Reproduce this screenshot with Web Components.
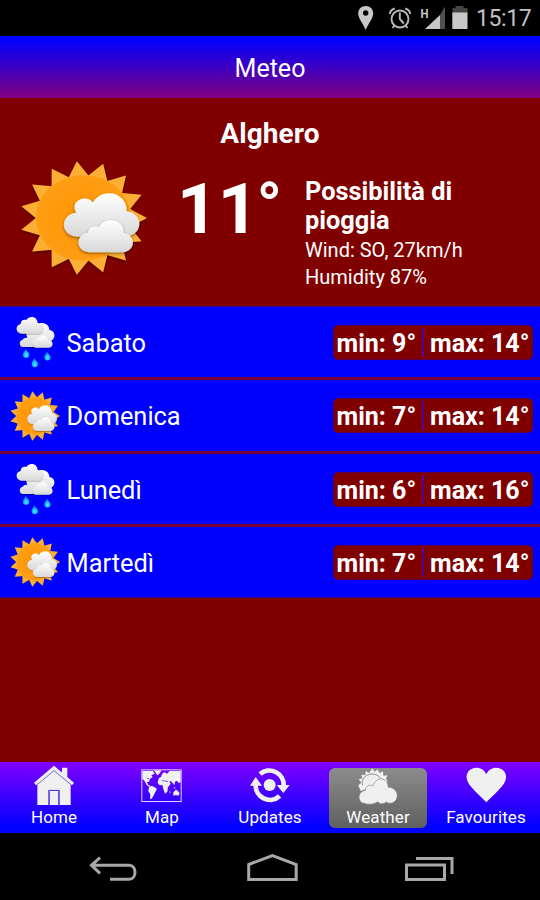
<!DOCTYPE html>
<html lang="it">
<head>
<meta charset="utf-8">
<title>Meteo</title>
<style>
    body {
    margin: 0;
    width: 540px;
    height: 900px;
    overflow: hidden;
    background: #800000;
    color: #fff;
    font-family: Roboto, "Liberation Sans", sans-serif;
    }
</style>
</head>
<body>
<weather-app>
    <status-bar slot="top" time="15:17"></status-bar>
    <page-header slot="top">Meteo</page-header>
    <current-weather city="Alghero" temp="11" icon="sun">
        <span slot="summary">Possibilità di pioggia</span>
        <span slot="wind">Wind: SO, 27km/h</span>
        <span slot="humidity">Humidity 87%</span>
    </current-weather>
    <forecast-list>
        <forecast-day icon="rain" min="9°" max="14°">Sabato</forecast-day>
        <forecast-day icon="sun" min="7°" max="14°">Domenica</forecast-day>
        <forecast-day icon="rain" min="6°" max="16°">Lunedì</forecast-day>
        <forecast-day icon="sun" min="7°" max="14°">Martedì</forecast-day>
    </forecast-list>
    <tab-bar slot="bottom">
        <tab-item icon="home">Home</tab-item>
        <tab-item icon="map">Map</tab-item>
        <tab-item icon="updates">Updates</tab-item>
        <tab-item icon="weather" active>Weather</tab-item>
        <tab-item icon="favourites">Favourites</tab-item>
    </tab-bar>
    <nav-bar slot="bottom"></nav-bar>
</weather-app>

<script>
class BaseElement extends HTMLElement {
    constructor() {
    super();
    this.attachShadow({ mode: 'open' });
}

connectedCallback() {
    this.shadowRoot.innerHTML = this.render();
}
}

class WeatherApp extends BaseElement {
render() {
    return `
    <style>
        :host {
        display: flex;
        flex-direction: column;
        height: 900px;
        }

        main {
        flex: 1;
        min-height: 0;
        }
    </style>
    <slot name="top"></slot>
    <main><slot></slot></main>
    <slot name="bottom"></slot>
    `;
}
}

class StatusBar extends BaseElement {
render() {
    return `
    <style>
        :host {
        display: flex;
        justify-content: flex-end;
        box-sizing: border-box;
        height: 36px;
        padding-right: 8px;
        background: #000;
        color: #c0c0c0;
        }

        svg {
        width: 120px;
        height: 36px;
        }

        .time {
        width: 56px;
        font-size: 23px;
        line-height: 38px;
        letter-spacing: -0.4px;
        white-space: nowrap;
        }
    </style>
    <svg viewBox="356 0 120 36" fill="#c8c8c8">
        <path fill-rule="evenodd" d="M365.7 6c-4.400 0-7.500 3.200-7.500 7.300 0 5.200 5 10.500 7.500 16.700 2.500-6.200 7.500-11.500 7.500-16.700 0-4.100-3.100-7.300-7.500-7.300zM365.700 10.300a2.700 2.700 0 1 1 0 5.400 2.700 2.700 0 0 1 0-5.400z"/>
        <g fill="none" stroke="#b8b8b8" stroke-width="1.900">
            <circle cx="400" cy="19" r="8.500"/>
            <path d="M399.800 12.500v6.500l4 4.500M389.800 14c.3-2.700 2-4.700 5-5.500M410.200 14c-.3-2.700-2-4.700-5-5.500M394.500 25.500l-2 2.500M405.500 25.500l2 2.500"/>
        </g>
        <path d="M425 29l15-14v14z"/>
        <path fill="#505050" d="M440 15l5-8.500V29h-5z"/>
        <text x="420.500" y="17.500" font-size="13" font-weight="bold" textLength="8" lengthAdjust="spacingAndGlyphs">H</text>
        <path fill="#454545" d="M455.500 6h8v2h4v5h-15V8h3z"/>
        <path d="M452.300 12.500h15.200V29h-15.200z"/>
    </svg>
    <span class="time">${this.getAttribute('time')}</span>
    `;
}
}

class PageHeader extends BaseElement {
render() {
    return `
    <style>
        :host {
        display: block;
        height: 62px;
        background: linear-gradient(#0000ff 5%, #800080);
        font-size: 25px;
        line-height: 66px;
        text-align: center;
        }
    </style>
    <slot></slot>
    `;
}
}

// Sun rays: 15 outer tips, first one pointing right
function sunRays() {
    const points = [];
    for (let i = 0; i < 30; i++) {
        const r = i % 2 ? 48 : 64;
        const a = i * Math.PI / 15;
        points.push((r * Math.cos(a)).toFixed(1) + ',' + (r * Math.sin(a)).toFixed(1));
    }
    return points.join(' ');
}

const CLOUD_FILL = `
    <linearGradient id="cloud" x1="0" y1="0" x2="0" y2="1">
        <stop offset="0" stop-color="#fff"/>
        <stop offset="1" stop-color="#d8d8d8"/>
    </linearGradient>
    <filter id="shadow" x="-20%" y="-20%" width="140%" height="150%">
        <feDropShadow dx="0" dy="1.500" stdDeviation="1.500" flood-color="#000" flood-opacity="0.450"/>
    </filter>`;

const WEATHER_ICONS = {
    sun: `
    <svg viewBox="-64 -64 128 128" preserveAspectRatio="none">
        <defs>${CLOUD_FILL}
            <radialGradient id="disc"><stop offset="0" stop-color="#ff9400"/><stop offset="1" stop-color="#ff9e14"/></radialGradient>
        </defs>
        <polygon points="${sunRays()}" fill="#fbb034" filter="url(#shadow)"/>
        <circle r="48" fill="url(#disc)"/>
        <path fill="url(#cloud)" filter="url(#shadow)" d="M-5 21A13.500 13.500 0 0 1-7.500-6 9.800 9.800 0 0 1 9.500-17.500C13-24 19-27.700 26-27.700 36-27.700 44-19 43.500-7.500A13.800 13.800 0 0 1 41 20.600z"/>
        <path fill="url(#cloud)" filter="url(#shadow)" d="M5 38.400A11 11 0 0 1 4.500 16.500 7.500 7.500 0 0 1 15.500 10C19 4.500 23 2.600 28 2.600 36 2.600 40.500 9 40.500 16.500A11 11 0 0 1 37 38.400z"/>
    </svg>`,
    rain: `
    <svg viewBox="30 48 150 168">
        <defs>${CLOUD_FILL}
            <radialGradient id="drop" cy="70%"><stop offset="0" stop-color="#50ecff"/><stop offset="1" stop-color="#0098f0"/></radialGradient>
        </defs>
        <path fill="url(#cloud)" filter="url(#shadow)" d="M70 150c-14-1-14-20-2-22 3-4 8-7 14-5l-5-20 45-25c16-1 26 8 26 21 18 2 20 24 6 32l-50 19z"/>
        <path fill="url(#cloud)" filter="url(#shadow)" d="M64 110c-18-2-19-26-2-29 0-11 9-15 17-12 9-15 33-12 34 9 22-1 24 29 4 32z"/>
        <path fill="url(#cloud)" filter="url(#shadow)" d="M108 152c-15-1-15-22 0-24 0-8 8-10 12-8 9-10 25-4 24 10 18-1 18 21 2 22z"/>
        <g fill="url(#drop)">
            <path id="d" d="M77 156c3 7 11 10 11 17a9.500 9.500 0 0 1-19 0c0-7 6-10 8-17z"/>
            <use href="#d" x="26" y="28"/>
            <use href="#d" x="64" y="8"/>
        </g>
    </svg>`
};

class WeatherIcon extends BaseElement {
render() {
    return `
    <style>
        :host {
        display: block;
        }

        svg {
        display: block;
        width: 100%;
        height: 100%;
        overflow: visible;
        }
    </style>
    ${WEATHER_ICONS[this.getAttribute('name')]}
    `;
}
}

class CurrentWeather extends BaseElement {
render() {
    return `
    <style>
        :host {
        display: block;
        box-sizing: border-box;
        height: 208px;
        padding-top: 17px;
        background: #800000;
        }

        h2 {
        margin: 0;
        font-size: 28px;
        line-height: 38px;
        letter-spacing: 0.1px;
        text-align: center;
        }

        .now {
        display: grid;
        grid-template-columns: 127px 103px 180px;
        column-gap: 29px;
        padding: 8px 0 0 20px;
        }

        weather-icon {
        width: 127px;
        height: 114px;
        }

        .temp {
        margin-left: 1px;
        padding-top: 6px;
        font-size: 71px;
        font-weight: bold;
        line-height: 84px;
        white-space: nowrap;
        }

        .temp small {
        margin-left: -2px;
        font-size: 66px;
        line-height: 1;
        vertical-align: 4px;
        }

        .details {
        padding-top: 16px;
        margin-left: -3px;
        font-size: 20px;
        line-height: 27px;
        white-space: nowrap;
        }

        .details div {
        height: 27px;
        }

        .details .summary {
        height: 60px;
        font-size: 25.400px;
        font-weight: bold;
        line-height: 29px;
        white-space: normal;
        }
    </style>
    <h2>${this.getAttribute('city')}</h2>
    <div class="now">
        <weather-icon name="${this.getAttribute('icon')}"></weather-icon>
        <div class="temp">${this.getAttribute('temp')}<small>°</small></div>
        <div class="details">
            <div class="summary"><slot name="summary"></slot></div>
            <div><slot name="wind"></slot></div>
            <div><slot name="humidity"></slot></div>
        </div>
    </div>
    `;
}
}

class ForecastList extends BaseElement {
render() {
    return `
    <style>
        :host {
        display: grid;
        grid-template-rows: 74px 74px 73px 71px;
        }
    </style>
    <slot></slot>
    `;
}
}

class ForecastDay extends BaseElement {
render() {
    return `
    <style>
        :host {
        display: flex;
        align-items: center;
        box-sizing: border-box;
        padding: 0 7px 0 10px;
        border-bottom: 3px solid #740030;
        background: #0000ff;
        font-size: 25.400px;
        }

        :host(:first-child) {
        border-top: 1px solid #4000a0;
        }

        :host(:last-child) {
        border-bottom: 1px solid #4000a0;
        }

        weather-icon {
        width: 50px;
        height: 50px;
        }

        weather-icon[name="rain"] {
        height: 56px;
        margin-top: -3px;
        }

        .day {
        flex: 1;
        padding: 1px 0 0 6.500px;
        }

        .range {
        display: flex;
        align-items: center;
        box-sizing: border-box;
        width: 200px;
        height: 35px;
        border: 1px solid #600040;
        border-radius: 5px;
        background: #800000;
        font-size: 25px;
        font-weight: bold;
        white-space: nowrap;
        }

        .range span {
        box-sizing: border-box;
        height: 29px;
        line-height: 31px;
        }

        .min {
        width: 90px;
        padding-left: 2.500px;
        border-right: 2px solid #5000a0;
        }

        .max {
        padding-left: 6px;
        }
    </style>
    <weather-icon name="${this.getAttribute('icon')}"></weather-icon>
    <div class="day"><slot></slot></div>
    <div class="range">
        <span class="min">min: ${this.getAttribute('min')}</span>
        <span class="max">max: ${this.getAttribute('max')}</span>
    </div>
    `;
}
}

class TabBar extends BaseElement {
render() {
    return `
    <style>
        :host {
        display: grid;
        grid-template-columns: repeat(5, 108px);
        height: 71px;
        background: linear-gradient(#8000ff, #0000ff 92%);
        }
    </style>
    <slot></slot>
    `;
}
}

const TAB_ICONS = {
    home: `
    <svg viewBox="96 42 132 120">
        <path d="M186 53h16v30l-16-13z"/>
        <path d="M112 100l50-41 50 41v65h-34v-45h-32v45h-34z"/>
        <path d="M149 123h26v42h-26z"/>
        <path d="M102 98l60-51 60 51-6 8-54-45-54 45z"/>
        <path fill="none" stroke="#6050d0" stroke-width="2.500" d="M110 105l52-43 52 43M146 165v-44h32v44"/>
    </svg>`,
    map: `
    <svg viewBox="420 42 132 120">
        <rect x="425.500" y="59.500" width="118" height="95" fill="none" stroke="#dcd4ff" stroke-width="3"/>
        <path d="M427 63h32l5 8-10 5 4 6-8 4-3 9-7 1 5 8 6 4-2 3-9-6-7-13-6-6z"/>
        <path d="M462 61h22l-4 8-8 7-5-8z"/>
        <path d="M447 111l8-4 8 4 8 6-5 9-4 8-7 12-5 1 1-14-6-9z"/>
        <path d="M474 93l3-9 6-3 3-9 7-6 8 5 8-8h33v34l-6 2-4-6-6 1-3 12-5-7-5-5-5-1 4 8-8 11-2 13-7 6-5-14-2-11-10-1-5-7z"/>
        <path d="M520 127l8-8 6 4 5 7-4 7-8-2-7 2zM520 111l7 3-2 3zM509 122l3 4-3 5z"/>
        <path fill="none" stroke="#3a10ff" stroke-width="2" d="M485 92l10 1 9 2M440 84l7 2"/>
    </svg>`,
    updates: `
    <svg viewBox="84 42 132 120">
        <circle cx="149" cy="105" r="18"/>
        <path fill="none" stroke="#f0f0f0" stroke-width="14" d="M120 72A43 43 0 0 1 191 107M179 138A43 43 0 0 1 107 103"/>
        <path d="M170 105h39l-19 24zM90 107l17-26 19 26z"/>
    </svg>`,
    weather: `
    <svg viewBox="408 42 132 120">
        <path d="M415 106l9-8-8-10 11-3-3-11 12 1 1-12 11 6 8-14 8 10 9-7 5 11 11-5 1 13 12-1-4 11 6 7-60 21-22 8z"/>
        <path fill="#eee" stroke="#7c7c7c" stroke-width="2.500" d="M428 106c-6-16 7-34 28-34 12 0 19 4 25 13"/>
        <path stroke="#808080" stroke-width="2" d="M432 160c-21-3-20-36 4-39 2-14 13-19 23-13 10-31 45-27 46 4 20-1 33 20 24 36-7 13-22 15-30 8-9 7-19 7-26-1-12 9-28 9-41 5z"/>
    </svg>`,
    favourites: `
    <svg viewBox="732 42 132 120">
        <path d="M799 157c-17-17-35-34-47-48-26-31-6-56 17-56 14 0 24 7 30 19 6-12 16-19 30-19 23 0 43 25 17 56-12 14-30 31-47 48z"/>
    </svg>`
};

class TabItem extends BaseElement {
render() {
    return `
    <style>
        :host {
        display: flex;
        flex-direction: column;
        align-items: center;
        box-sizing: border-box;
        height: 60px;
        margin: 6px 5px 0;
        border-radius: 6px;
        font-size: 17px;
        line-height: 20px;
        letter-spacing: 0.100px;
        white-space: nowrap;
        }

        :host([active]) {
        background: linear-gradient(#8c8c8c, #606060);
        }

        svg {
        width: 44px;
        height: 40px;
        margin-top: -4px;
        margin-bottom: 3px;
        flex: none;
        fill: #f0f0f0;
        overflow: visible;
        }
    </style>
    ${TAB_ICONS[this.getAttribute('icon')]}
    <slot></slot>
    `;
}
}

class NavBar extends BaseElement {
render() {
    return `
    <style>
        :host {
        display: flex;
        justify-content: space-between;
        align-items: flex-start;
        box-sizing: border-box;
        height: 67px;
        padding: 20px 85px 0 88px;
        background: #000;
        }

        svg {
        width: 52px;
        height: 32px;
        fill: none;
        stroke: #a8a8a8;
        stroke-width: 3;
        }
    </style>
    <svg viewBox="88 853 52 32"><path d="M92 865.300h37c8 0 8 14 0 14h-19M100 857.500l-8.500 7.800 8.500 8"/></svg>
    <svg viewBox="244 853 52 32"><path d="M246.700 864.500l23.700-9 23.800 9v15h-47.500z"/></svg>
    <svg viewBox="403 853 52 32"><path d="M406.500 865h38v14.500h-38zM416 858.500h36V874"/></svg>
    `;
}
}

customElements.define('weather-icon', WeatherIcon);
customElements.define('weather-app', WeatherApp);
customElements.define('status-bar', StatusBar);
customElements.define('page-header', PageHeader);
customElements.define('current-weather', CurrentWeather);
customElements.define('forecast-list', ForecastList);
customElements.define('forecast-day', ForecastDay);
customElements.define('tab-bar', TabBar);
customElements.define('tab-item', TabItem);
customElements.define('nav-bar', NavBar);
</script>
</body>
</html>
